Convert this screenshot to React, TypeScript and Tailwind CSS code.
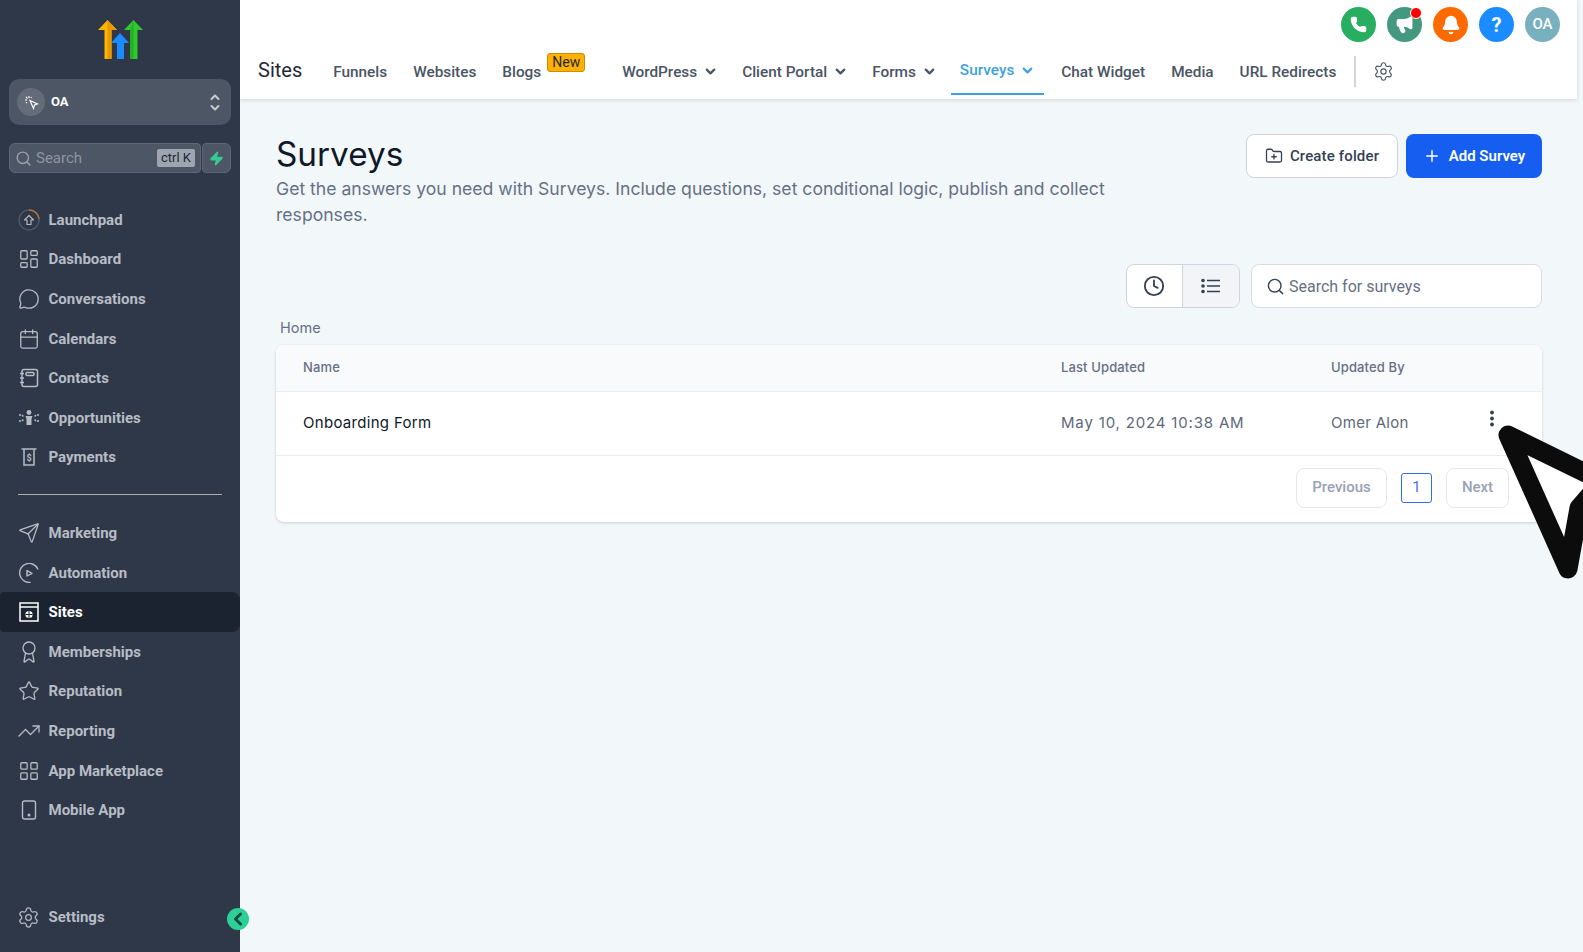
import { ReactNode } from "react";
import {
  Award,
  Bell,
  Calendar,
  ChevronDown,
  ChevronLeft,
  Clock,
  FolderPlus,
  LayoutDashboard,
  LayoutGrid,
  Megaphone,
  MessageCircle,
  Phone,
  Plus,
  Search,
  Send,
  Settings,
  Star,
  TrendingUp,
  Zap,
} from "lucide-react";

const Logo = () => (
  <svg width="46" height="40" viewBox="0 0 46 40" aria-hidden="true">
    <path d="M0 10 9.5 0 19 10h-5.5v29h-7V10z" fill="#ffb400" />
    <path d="M9.5 0 19 10h-5.500v29H9.500z" fill="#e69a00" />
    <path d="M26 10 35.500 0 45 10h-5.500v29h-7V10z" fill="#2fc92f" />
    <path d="M35.500 0 32 10v29h3.500z" fill="#27ae27" />
    <path d="M13 23 22 13l9 10h-5v16h-7V23z" fill="#1a8cff" />
  </svg>
);

const LaunchpadIcon = () => (
  <svg width="22" height="22" viewBox="0 0 22 22" fill="none" aria-hidden="true">
    <circle cx="11" cy="11" r="10" stroke="#4b5563" strokeWidth="1.500" />
    <path d="M11 1a10 10 0 0 1 10 9" stroke="#b7713d" strokeWidth="1.500" />
    <path d="M6.500 11 11 6.500l4.500 4.500h-2.500v4.500H9V11z" stroke="#b4b9c2" strokeWidth="1.200" strokeLinejoin="round" />
  </svg>
);

const ContactsIcon = () => (
  <svg width="20" height="20" viewBox="0 0 20 20" fill="none" stroke="currentColor" strokeWidth="1.500" aria-hidden="true">
    <rect x="3" y="1.500" width="15.500" height="17" rx="2" />
    <rect x="7" y="4.500" width="8" height="3" rx="1" />
    <path d="M1 5.500h4M1 10h4M1 14.500h4" />
  </svg>
);

const OpportunitiesIcon = () => (
  <svg width="22" height="20" viewBox="0 0 22 20" fill="none" stroke="currentColor" strokeWidth="1.500" aria-hidden="true">
    <circle cx="11" cy="4.500" r="2.400" fill="currentColor" stroke="none" />
    <path d="M7.500 8h7l-1 3v6h-5v-6z" fill="currentColor" stroke="none" />
    <path d="M1 7h3l1.500 1.500M1 13h3l1.500-1.500M21 7h-3l-1.500 1.500M21 13h-3l-1.500-1.500" strokeDasharray="2 1" />
  </svg>
);

const PaymentsIcon = () => (
  <svg width="20" height="20" viewBox="0 0 20 20" fill="none" stroke="currentColor" strokeWidth="1.500" aria-hidden="true">
    <path d="M2.500 2h15M5 2v16h10V2" />
    <text x="10" y="14" fontSize="9" fontWeight="700" fontFamily="Roboto, sans-serif" textAnchor="middle" fill="currentColor" stroke="none">
      $
    </text>
  </svg>
);

const AutomationIcon = () => (
  <svg width="20" height="20" viewBox="0 0 20 20" fill="none" stroke="currentColor" strokeWidth="1.400" strokeLinecap="round" aria-hidden="true">
    <path d="M18.800 6A9.500 9.500 0 1 0 11 19.400" />
    <path d="M8 7.500 13 10.300 8 13z" strokeLinejoin="round" />
  </svg>
);

const SitesIcon = () => (
  <svg width="20" height="20" viewBox="0 0 20 20" fill="none" stroke="currentColor" strokeWidth="1.500" aria-hidden="true">
    <rect x="1" y="1" width="18" height="18" />
    <path d="M1 5h18" />
    <circle cx="10" cy="12.500" r="3.600" fill="currentColor" stroke="none" />
    <path d="M6.400 12.500h7.200M10 9v7" stroke="#1c2330" strokeWidth="1" />
  </svg>
);

const MobileIcon = () => (
  <svg width="16" height="20" viewBox="0 0 16 20" fill="none" stroke="currentColor" strokeWidth="1.400" aria-hidden="true">
    <rect x="1.500" y="1" width="13" height="18" rx="2" />
    <circle cx="8" cy="15" r="0.800" fill="currentColor" />
  </svg>
);

const UpDownIcon = () => (
  <svg width="10" height="17" viewBox="0 0 10 17" fill="none" stroke="#c6cad1" strokeWidth="2" strokeLinecap="round" strokeLinejoin="round" aria-hidden="true">
    <path d="M1.500 5 5 1.500 8.500 5M1.500 12 5 15.500 8.500 12" />
  </svg>
);

const ListIcon = () => (
  <svg width="20" height="16" viewBox="0 0 20 16" fill="none" stroke="#344054" strokeWidth="1.700" aria-hidden="true">
    <path d="M6 2.500h13M6 8h13M6 13.500h13" />
    <circle cx="2" cy="2.500" r="1.800" fill="#344054" stroke="none" />
    <circle cx="2" cy="8" r="1.800" fill="#344054" stroke="none" />
    <circle cx="2" cy="13.500" r="1.800" fill="#344054" stroke="none" />
  </svg>
);

const DotsIcon = () => (
  <svg className="mb-[10px]" width="6" height="17" viewBox="0 0 6 17" fill="#344054" aria-hidden="true">
    <circle cx="3" cy="2.500" r="1.900" />
    <circle cx="3" cy="8.500" r="1.900" />
    <circle cx="3" cy="14.500" r="1.900" />
  </svg>
);

const Cursor = () => (
  <svg
    className="absolute left-[1490px] top-[415px]"
    width="120"
    height="175"
    viewBox="0 0 120 175"
    aria-hidden="true"
  >
    <path
      d="M18 20 112 66 89 93 78 154z"
      fill="#fff"
      stroke="#0c0c0c"
      strokeWidth="19"
      strokeLinejoin="round"
    />
  </svg>
);

interface NavItemProps {
  icon: ReactNode;
  label: string;
  active?: boolean;
}

const NavItem = ({ icon, label, active }: NavItemProps) => (
  <a
    className={
      active
        ? "flex h-[39.6px] items-center rounded-r-lg rounded-l-sm bg-[#1c2330] text-white"
        : "flex h-[39.6px] items-center text-[#b7bcc5]"
    }
  >
    <span className="flex w-[48.500px] shrink-0 items-center justify-center pl-[9px]">{icon}</span>
    <span className="text-[15px] leading-5 font-bold">{label}</span>
  </a>
);

const Tab = ({ label, chevron }: { label: string; chevron?: boolean }) => (
  <a className="flex items-center px-[13px] text-[15.350px] leading-5 font-medium text-[#4b5563]">
    {label}
    {chevron && <ChevronDown className="mr-[-2px] ml-[6px] h-[15px] w-[15px]" strokeWidth={3.500} />}
  </a>
);

const RoundIcon = ({ color, children }: { color: string; children: ReactNode }) => (
  <span className={`relative flex h-[35px] w-[35px] items-center justify-center rounded-full text-white ${color}`}>
    {children}
  </span>
);

export default function App() {
  return (
    <div className="relative flex h-screen w-full overflow-hidden bg-[#f2f7fa] font-['Inter',sans-serif]">
      <aside className="relative flex w-[240px] shrink-0 flex-col bg-[#2f3849] font-['Roboto',sans-serif]">
        <div className="flex justify-center pt-[20px] pb-[19px] pl-[1px]">
          <Logo />
        </div>

        <div className="mx-[9px] flex h-[46px] items-center rounded-[10px] bg-[#4d5664] pr-[11px] pl-[8px]">
          <span className="flex h-[28px] w-[28px] items-center justify-center rounded-full bg-[#646c79] text-[10px] text-white">
            <svg width="15" height="15" viewBox="0 0 15 15" fill="none" stroke="currentColor" strokeWidth="1.100" aria-hidden="true">
              <path d="M6 5.500 13.500 9 10.500 10 9.500 13.500z" />
              <path d="M1 5h2M5 1v2M2 2l1.500 1.500M7.500 2 6.800 3M2 8l1-.7" />
            </svg>
          </span>
          <span className="ml-[6px] flex-1 text-[13px] font-bold text-white">OA</span>
          <UpDownIcon />
        </div>

        <div className="mx-[9px] mt-[18px] flex h-[30px] gap-[1px]">
          <div className="flex flex-1 items-center rounded-l-md rounded-r-sm border border-[#5f6775] bg-[#4d5664] pr-[5px] pl-[5px]">
            <Search className="h-[17px] w-[17px] text-[#9aa1ad]" />
            <span className="ml-[4px] flex-1 text-[15px] leading-5 text-[#8d95a2]">Search</span>
            <span className="rounded-[2px] bg-[#9fa5b0] px-[4px] text-[13px] leading-[18px] text-[#1f2733]">ctrl K</span>
          </div>
          <div className="flex w-[29px] items-center justify-center rounded-l-sm rounded-r-md border border-[#5f6775] bg-[#4d5664]">
            <Zap className="h-[15px] w-[15px] fill-[#37ca93] text-[#37ca93]" />
          </div>
        </div>

        <nav className="mt-[27px] flex flex-col">
          <NavItem icon={<LaunchpadIcon />} label="Launchpad" />
          <NavItem icon={<LayoutDashboard className="h-[22px] w-[22px]" strokeWidth={1.400} />} label="Dashboard" />
          <NavItem icon={<MessageCircle className="h-[22px] w-[22px]" strokeWidth={1.400} />} label="Conversations" />
          <NavItem icon={<Calendar className="h-[22px] w-[22px]" strokeWidth={1.400} />} label="Calendars" />
          <NavItem icon={<ContactsIcon />} label="Contacts" />
          <NavItem icon={<OpportunitiesIcon />} label="Opportunities" />
          <NavItem icon={<PaymentsIcon />} label="Payments" />
        </nav>

        <div className="mx-[18px] mt-[17px] mb-[18px] h-px bg-[#a9aeb7]" />

        <nav className="flex flex-col">
          <NavItem icon={<Send className="h-[22px] w-[22px]" strokeWidth={1.400} />} label="Marketing" />
          <NavItem icon={<AutomationIcon />} label="Automation" />
          <NavItem icon={<SitesIcon />} label="Sites" active />
          <NavItem icon={<Award className="h-[24px] w-[24px]" strokeWidth={1.300} />} label="Memberships" />
          <NavItem icon={<Star className="h-[22px] w-[22px]" strokeWidth={1.400} />} label="Reputation" />
          <NavItem icon={<TrendingUp className="h-[24px] w-[24px]" strokeWidth={1.300} />} label="Reporting" />
          <NavItem icon={<LayoutGrid className="h-[22px] w-[22px]" strokeWidth={1.400} />} label="App Marketplace" />
          <NavItem icon={<MobileIcon />} label="Mobile App" />
        </nav>

        <div className="mt-auto mb-[15px]">
          <NavItem icon={<Settings className="h-[23px] w-[23px]" strokeWidth={1.300} />} label="Settings" />
        </div>

        <span className="absolute right-[-9px] bottom-[22px] flex h-[22px] w-[22px] items-center justify-center rounded-full bg-[#2ecf96] text-[#0d4a3c]">
          <ChevronLeft className="h-[20px] w-[20px]" strokeWidth={3.500} />
        </span>
      </aside>

      <main className="flex min-w-0 flex-1 flex-col">
        <header className="mr-[6px] h-[99px] bg-white font-['Roboto',sans-serif] shadow-[0_1px_4px_rgba(0,0,0,0.15)]">
          <div className="flex h-[47px] items-start justify-end gap-[11px] pt-[7px] pr-[17px]">
            <RoundIcon color="bg-[#27ae60]">
              <Phone className="h-[17px] w-[17px] fill-white" />
            </RoundIcon>
            <RoundIcon color="bg-[#459880]">
              <Megaphone className="h-[19px] w-[19px] fill-white" />
              <span className="absolute top-0 right-0 h-3 w-3 rounded-full border border-white bg-[#ff0000]" />
            </RoundIcon>
            <RoundIcon color="bg-[#ff6a00]">
              <Bell className="h-[20px] w-[20px] fill-white" />
            </RoundIcon>
            <RoundIcon color="bg-[#1a8cff]">
              <span className="text-[20px] font-bold">?</span>
            </RoundIcon>
            <RoundIcon color="bg-[#79b0bf]">
              <span className="text-[15px] font-medium">OA</span>
            </RoundIcon>
          </div>

          <div className="flex h-[49px] items-center pl-[18px]">
            <h2 className="mr-[18px] mb-[4px] text-[20px] leading-7 font-normal text-[#1f2937]">Sites</h2>
            <div className="flex h-[44px] items-center">
              <Tab label="Funnels" />
              <Tab label="Websites" />
              <a className="relative mr-[24px] flex items-center pl-[13px] text-[15.350px] leading-5 font-medium text-[#4b5563]">
                Blogs
                <span className="mb-[18px] ml-[6px] rounded-[3px] border border-[#c98d00] bg-[#ffb000] px-[4px] text-[14px] leading-[17px] font-normal text-[#1f2937]">
                  New
                </span>
              </a>
              <Tab label="WordPress" chevron />
              <Tab label="Client Portal" chevron />
              <Tab label="Forms" chevron />
              <a className="ml-[3px] flex h-[46px] items-center border-b-2 border-[#3fa2de] px-[9px] pb-[1px] text-[15.350px] leading-5 font-medium text-[#3fa2de]">
                Surveys
                <ChevronDown className="ml-[6px] h-[15px] w-[15px]" strokeWidth={3.500} />
              </a>
              <span className="w-[4px]" />
              <Tab label="Chat Widget" />
              <Tab label="Media" />
              <Tab label="URL Redirects" />
            </div>
            <span className="ml-[5px] h-[31px] w-[2px] bg-[#d1d5db]" />
            <Settings className="ml-[17px] h-[21px] w-[21px] text-[#4b5563]" strokeWidth={1.300} />
          </div>
        </header>

        <div className="flex flex-1 flex-col pt-[35px] pr-[41px] pl-[36px]">
          <div className="flex items-start justify-between">
            <div className="w-[850px]">
              <h1 className="mb-[1px] text-[33.300px] leading-[41px] font-normal text-[#101828]">Surveys</h1>
              <p className="text-[17.600px] leading-[26px] text-[#667085]">
                Get the answers you need with Surveys. Include questions, set conditional logic, publish and collect responses.
              </p>
            </div>
            <div className="flex gap-2">
              <button className="flex h-[44px] w-[152px] items-center justify-center gap-[7px] rounded-lg border border-[#d0d5dd] bg-white font-['Roboto',sans-serif] text-[15px] font-medium tracking-[0.01em] text-[#344054]">
                <FolderPlus className="h-[18px] w-[18px]" strokeWidth={1.700} />
                Create folder
              </button>
              <button className="flex h-[44px] w-[136px] items-center justify-center gap-[8px] rounded-lg bg-[#155eef] font-['Roboto',sans-serif] text-[15px] font-semibold text-white">
                <Plus className="h-[18px] w-[18px]" strokeWidth={2} />
                Add Survey
              </button>
            </div>
          </div>

          <div className="mt-[36px] flex justify-end gap-[11px]">
            <div className="flex h-[44px] w-[114px] overflow-hidden rounded-lg border border-[#d0d5dd] bg-white text-[#344054]">
              <span className="flex w-[56px] items-center justify-center border-r border-[#d0d5dd] pr-[1px]">
                <Clock className="h-[22px] w-[22px]" strokeWidth={2} />
              </span>
              <span className="flex flex-1 items-center justify-center bg-[#f2f4f7]">
                <ListIcon />
              </span>
            </div>
            <div className="flex h-[44px] w-[291px] items-center rounded-lg border border-[#d9dde3] bg-white pl-[14px]">
              <Search className="h-[19px] w-[19px] text-[#344054]" strokeWidth={1.800} />
              <span className="mt-[2px] ml-[4px] font-['Roboto',sans-serif] text-[16px] text-[#667085]">Search for surveys</span>
            </div>
          </div>

          <div className="mt-[10px] mb-[7px] pl-[4px] text-[14.500px] leading-5 text-[#667085]">Home</div>

          <div className="h-[177px] rounded-lg bg-white shadow-[0_1px_3px_rgba(16,24,40,0.18)]">
            <div className="grid h-[47px] grid-cols-[758px_270px_1fr] items-center rounded-t-lg border-b border-[#eaecf0] bg-[#f9fafb] pl-[27px] text-[13px] font-medium tracking-[0.01em] text-[#667085]">
              <span>Name</span>
              <span>Last Updated</span>
              <span>Updated By</span>
            </div>
            <div className="grid h-[64px] grid-cols-[758px_270px_158px_1fr] items-center border-b border-[#eaecf0] pl-[27px] text-[15px]">
              <span className="tracking-[0.02em] text-[#101828]">Onboarding Form</span>
              <span className="tracking-[0.055em] text-[#5d6879]">May 10, 2024 10:38 AM</span>
              <span className="tracking-[0.02em] text-[#5d6879]">Omer Alon</span>
              <DotsIcon />
            </div>
            <div className="flex h-[66px] items-center justify-end pr-[33px] pb-[3px] font-['Roboto',sans-serif] text-[15px] font-medium text-[#98a2b3]">
              <span className="flex h-[40px] w-[91px] items-center justify-center rounded-lg border border-[#e4e7ec]">Previous</span>
              <span className="mx-[14px] flex h-[30px] w-[31px] items-center justify-center rounded-[3px] border border-[#2f6fed] font-normal text-[#4f6ff0]">1</span>
              <span className="flex h-[40px] w-[63px] items-center justify-center rounded-lg border border-[#e4e7ec]">Next</span>
            </div>
          </div>
        </div>
      </main>

      <Cursor />
    </div>
  );
}
